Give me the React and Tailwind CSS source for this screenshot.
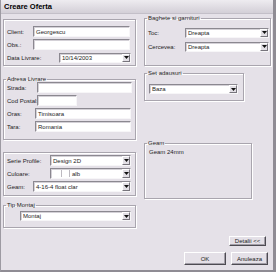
import React from 'react';

const field = 'flex items-center bg-white border border-t-[#8b8890] border-l-[#8b8890] border-b-[#f7f6f8] border-r-[#f7f6f8] shadow-[inset_1px_1px_0_#d4d1d7] pl-[2px] overflow-hidden whitespace-nowrap';

function Arrow() {
  return (
    <div className="ml-auto h-full w-[8px] flex items-center justify-center bg-[#e2dfe5] border border-t-white border-l-white border-b-[#77747c] border-r-[#77747c]">
      <svg width="5" height="3" viewBox="0 0 5 3">
        <path d="M0 0h5L2.5 3z" fill="#111" />
      </svg>
    </div>
  );
}

function TextBox({ w, children }) {
  return <div className={`${field} h-[11px] ${w}`}>{children}</div>;
}

function Select({ w, h = 'h-[11px]', children }) {
  return (
    <div className={`${field} ${h} ${w} pr-0`}>
      <div className="flex items-center gap-[2px]">{children}</div>
      <Arrow />
    </div>
  );
}

function Row({ label, lw, children }) {
  return (
    <div className="flex items-center h-[11px]">
      <span className={`${lw} pl-[3px] whitespace-nowrap`}>{label}</span>
      {children}
    </div>
  );
}

const etched = 'border border-[#a9a5ae] shadow-[inset_1px_1px_0_#fff,1px_1px_0_#fff]';

function Group({ legend, className, children }) {
  return (
    <fieldset className={`${etched} ${className}`}>
      <legend className="ml-[2px] px-[1px] leading-[8px]">{legend}</legend>
      {children}
    </fieldset>
  );
}

const button = 'flex items-center justify-center bg-[#e4e0e7] border border-t-white border-l-white border-b-[#4d4b52] border-r-[#4d4b52] shadow-[inset_-1px_-1px_0_#a19da6]';

export default function App() {
  return (
    <div className="w-[276px] h-[272px] flex flex-col bg-[#e5e1e8] border-l border-l-[#9d9aa2] border-r-[3px] border-r-[#8f8c94] border-b-2 border-b-[#8f8c94] text-[6px] leading-[8px] text-[#1c1c1c] font-['Liberation_Sans',Arial,sans-serif] overflow-hidden">
      <div className="h-[14px] shrink-0 flex items-center pl-[3px] bg-gradient-to-b from-[#eeecf0] to-[#d3cfd7] border-b border-b-[#c3bfc8] font-bold text-[7.5px] text-black">
        Creare Oferta
      </div>

      <div className="flex pl-[2px]">
        {/* left column */}
        <div className="w-[133px] flex flex-col pt-[5px]">
          <div className={`${etched} h-[47px] flex flex-col gap-[2px] pt-[6px]`}>
            <Row label="Client:" lw="w-[29px]">
              <TextBox w="w-[97px]">Georgescu</TextBox>
            </Row>
            <Row label="Obs.:" lw="w-[29px]">
              <TextBox w="w-[97px]" />
            </Row>
            <Row label="Data Livrare:" lw="w-[55px]">
              <Select w="w-[72px]" h="h-[10px]">10/14/2003</Select>
            </Row>
          </div>

          <Group legend="Adresa Livrare" className="mt-[9px] h-[65px]">
            <div className="flex flex-col gap-[2px] -mt-[1px]">
              <Row label="Strada:" lw="w-[33px]">
                <TextBox w="w-[95px]" />
              </Row>
              <Row label="Cod Postal:" lw="w-[33px]">
                <TextBox w="w-[40px]" />
              </Row>
              <Row label="Oras:" lw="w-[31px]">
                <TextBox w="w-[96px]">Timisoara</TextBox>
              </Row>
              <Row label="Tara:" lw="w-[31px]">
                <TextBox w="w-[96px]">Romania</TextBox>
              </Row>
            </div>
          </Group>

          <div className={`${etched} mt-[12px] h-[44px] flex flex-col gap-[2px] pt-[2px]`}>
            <Row label="Serie Profile:" lw="w-[46px]">
              <Select w="w-[81px]">Design 2D</Select>
            </Row>
            <Row label="Culoare:" lw="w-[46px]">
              <Select w="w-[81px]">
                <span className="w-[6px]" />
                <span className="w-[9px] h-[7px] border-l border-r border-[#bdbac1]" />
                <span>alb</span>
              </Select>
            </Row>
            <Row label="Geam:" lw="w-[29px]">
              <Select w="w-[98px]">4-16-4 float clar</Select>
            </Row>
          </div>

          <Group legend="Tip Montaj" className="mt-[5px] h-[27px]">
            <div className="pl-[16px] pt-[2px]">
              <Select w="w-[111px]" h="h-[10px]">Montaj</Select>
            </div>
          </Group>
        </div>

        {/* right column */}
        <div className="w-[127px] ml-[8px] flex flex-col">
          <Group legend="Baghete si garnituri" className="h-[52px]">
            <div className="flex flex-col gap-[3px] pt-[5px]">
              <Row label="Toc:" lw="w-[40px]">
                <Select w="w-[84px]" h="h-[10px]">Dreapta</Select>
              </Row>
              <Row label="Cercevea:" lw="w-[40px]">
                <Select w="w-[84px]" h="h-[10px]">Dreapta</Select>
              </Row>
            </div>
          </Group>

          <Group legend="Set adausuri" className="mt-[3px] w-[100px] h-[32px]">
            <div className="pl-[4px] pt-[7px]">
              <Select w="w-[89px]" h="h-[10px]">Baza</Select>
            </div>
          </Group>

          <Group legend="Geam" className="mt-[38px] w-[108px] h-[60px]">
            <div className="pl-[4px] pt-[1px]">Geam 24mm</div>
          </Group>

          <div className="mt-[37px] flex justify-end pr-[5px]">
            <button className={`${button} w-[37px] h-[10px] border-[#333136] leading-[8px]`}>Detalii &lt;&lt;</button>
          </div>
          <div className="mt-[6px] flex justify-end gap-[5px] pr-[3px]">
            <button className={`${button} w-[42px] h-[13px]`}>OK</button>
            <button className={`${button} w-[37px] h-[13px]`}>Anuleaza</button>
          </div>
        </div>
      </div>
    </div>
  );
}
